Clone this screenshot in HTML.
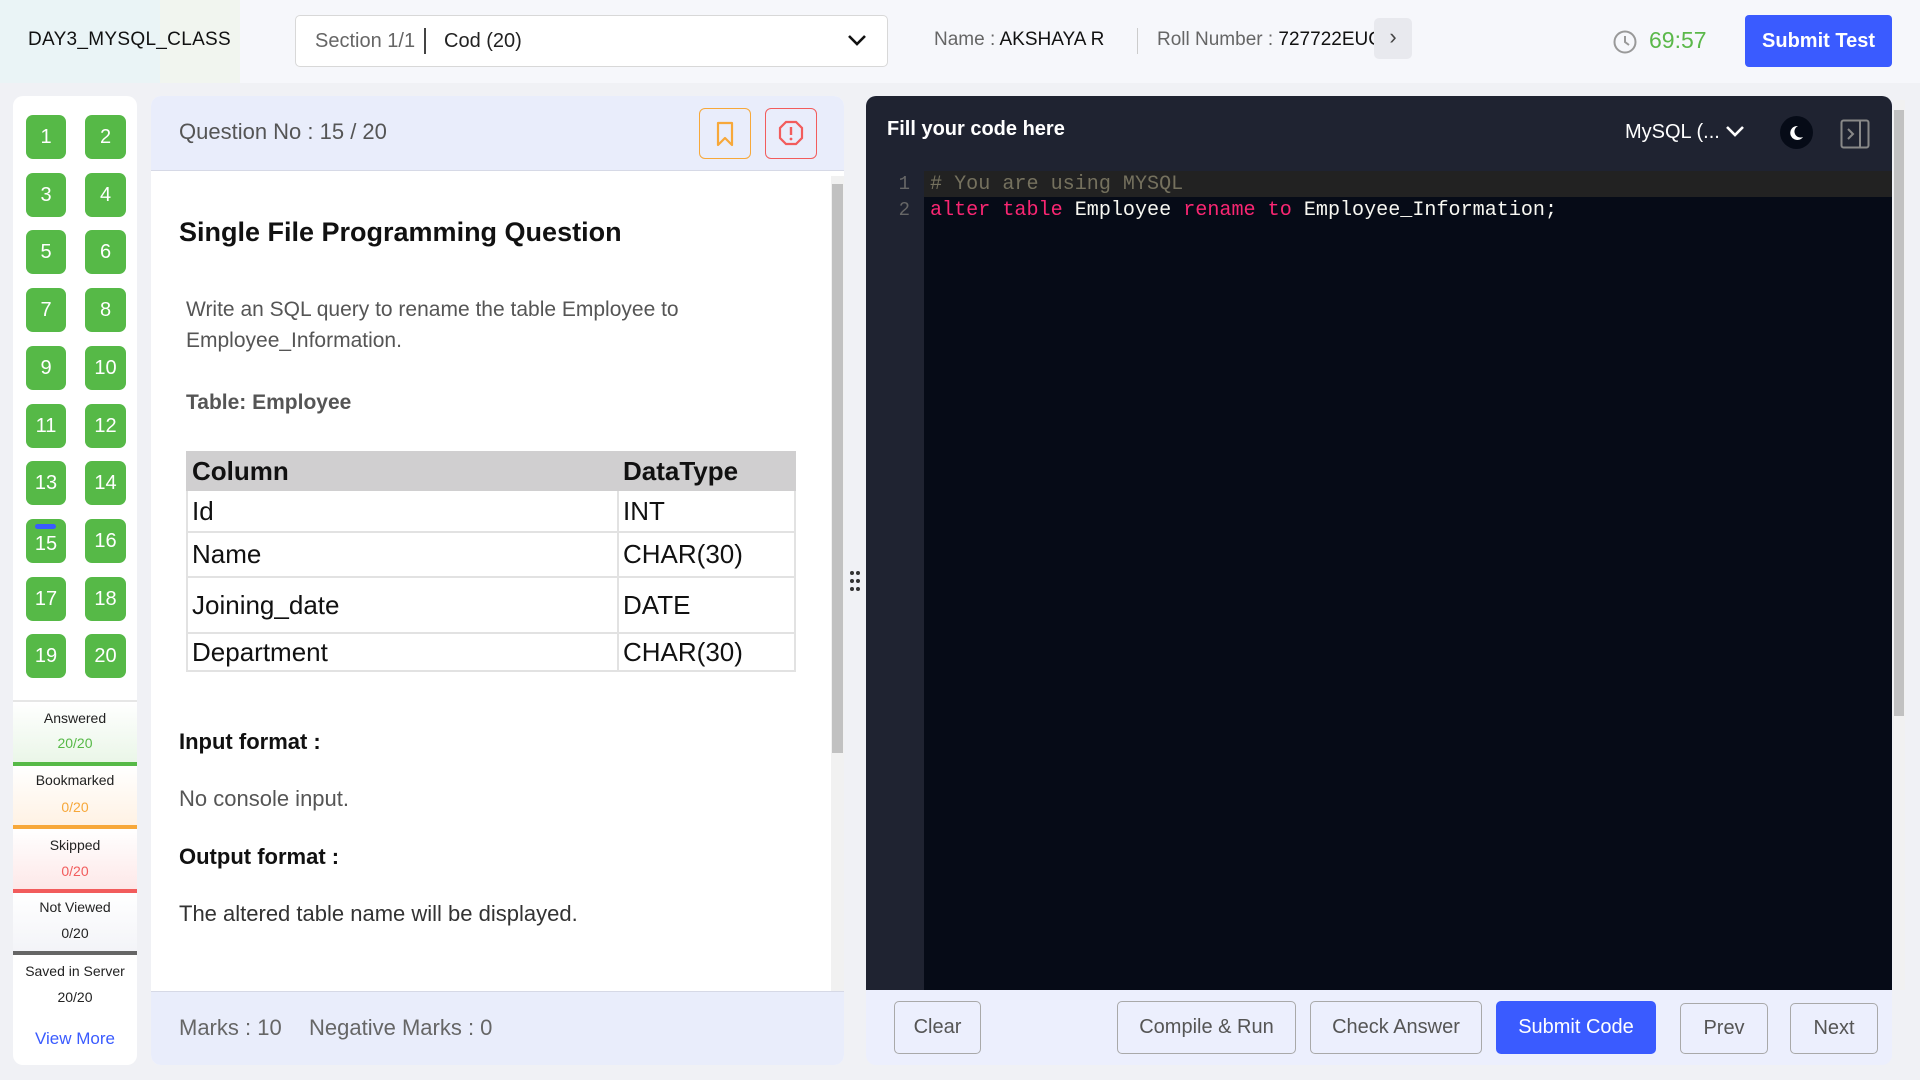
<!DOCTYPE html>
<html><head><meta charset="utf-8"><style>
*{box-sizing:border-box;margin:0;padding:0}
body{width:1920px;height:1080px;background:#f0f1f5;font-family:"Liberation Sans",sans-serif;position:relative;overflow:hidden;color:#222}
.a{position:absolute}
.hdr{left:0;top:0;width:1920px;height:83px;background:#f6f7fb}
.qb{width:40px;height:44px;background:#56b947;border-radius:7px;color:#fff;font-size:20px;display:flex;align-items:center;justify-content:center}
.c1{left:26px}.c2{left:85px;width:41px}
.st{left:13px;width:124px;text-align:center;font-size:14px;color:#222}
.btn{border:1px solid #a9a9a9;border-radius:5px;color:#555;font-size:20px;display:flex;align-items:center;justify-content:center;background:#eceffd}
table{border-collapse:collapse;font-size:26px;color:#111}
td{border:2px solid #e2e2e2;padding:0 4px;vertical-align:middle}
</style></head><body>
<div class="a hdr"></div>
<div class="a" style="left:0;top:0;width:160px;height:83px;background:#e3f1f4;opacity:.6"></div>
<div class="a" style="left:160px;top:0;width:80px;height:83px;background:#eff4e8;opacity:.6"></div>
<div class="a" style="left:28px;top:29px;font-size:19px;color:#111;letter-spacing:.3px">DAY3_MYSQL_CLASS</div>
<div class="a" style="left:295px;top:15px;width:593px;height:52px;background:#fff;border:1px solid #d8d8d8;border-radius:5px"></div>
<div class="a" style="left:315px;top:30px;font-size:20px;color:#666">Section 1/1</div>
<div class="a" style="left:424px;top:28px;width:2px;height:26px;background:#444"></div>
<div class="a" style="left:444px;top:30px;font-size:20px;color:#222">Cod (20)</div>
<svg class="a" style="left:846px;top:32px" width="22" height="16" viewBox="0 0 22 16"><path d="M3 4 L11 12 L19 4" fill="none" stroke="#111" stroke-width="2.6"/></svg>
<div class="a" style="left:934px;top:29px;font-size:19px;color:#666">Name : <span style="color:#111">AKSHAYA R</span></div>
<div class="a" style="left:1137px;top:28px;width:1px;height:26px;background:#ccc"></div>
<div class="a" style="left:1157px;top:29px;font-size:19px;color:#666;width:217px;white-space:nowrap;overflow:hidden">Roll Number : <span style="color:#111">727722EUCS</span></div>
<div class="a" style="left:1374px;top:18px;width:38px;height:41px;background:#e8e9ee;border-radius:5px;color:#444;font-size:22px;text-align:center;line-height:38px">›</div>
<svg class="a" style="left:1612px;top:29px" width="26" height="26" viewBox="0 0 26 26"><circle cx="13" cy="13" r="10.5" fill="none" stroke="#999" stroke-width="2"/><path d="M13 7v6l4 3" fill="none" stroke="#999" stroke-width="2"/></svg>
<div class="a" style="left:1649px;top:27px;font-size:23px;color:#5bb84a">69:57</div>
<div class="a" style="left:1745px;top:15px;width:147px;height:52px;background:#3a5bff;border-radius:4px;color:#fff;font-size:20px;font-weight:bold;text-align:center;line-height:52px">Submit Test</div>

<div class="a" style="left:13px;top:96px;width:124px;height:969px;background:#fff;border-radius:10px"></div>
<div class="a qb c1" style="top:115px">1</div><div class="a qb c2" style="top:115px">2</div>
<div class="a qb c1" style="top:173px">3</div><div class="a qb c2" style="top:173px">4</div>
<div class="a qb c1" style="top:230px">5</div><div class="a qb c2" style="top:230px">6</div>
<div class="a qb c1" style="top:288px">7</div><div class="a qb c2" style="top:288px">8</div>
<div class="a qb c1" style="top:346px">9</div><div class="a qb c2" style="top:346px">10</div>
<div class="a qb c1" style="top:404px">11</div><div class="a qb c2" style="top:404px">12</div>
<div class="a qb c1" style="top:461px">13</div><div class="a qb c2" style="top:461px">14</div>
<div class="a qb c1" style="top:519px;padding-top:6px">15</div><div class="a qb c2" style="top:519px">16</div>
<div class="a" style="left:35px;top:524px;width:21px;height:5px;background:#3a5bff;border-radius:3px"></div>
<div class="a qb c1" style="top:577px">17</div><div class="a qb c2" style="top:577px">18</div>
<div class="a qb c1" style="top:634px">19</div><div class="a qb c2" style="top:634px">20</div>
<div class="a" style="left:13px;top:700px;width:124px;height:2px;background:#e6e6e6"></div>
<div class="a" style="left:13px;top:702px;width:124px;height:60px;background:linear-gradient(#fff,#eaf6e8)"></div>
<div class="a" style="left:13px;top:762px;width:124px;height:4px;background:#56b947"></div>
<div class="a" style="left:13px;top:766px;width:124px;height:59px;background:linear-gradient(#fff,#fff2e4)"></div>
<div class="a" style="left:13px;top:825px;width:124px;height:4px;background:#f7a83a"></div>
<div class="a" style="left:13px;top:829px;width:124px;height:60px;background:linear-gradient(#fff,#fde8e8)"></div>
<div class="a" style="left:13px;top:889px;width:124px;height:4px;background:#f25c5c"></div>
<div class="a" style="left:13px;top:893px;width:124px;height:58px;background:linear-gradient(#fff,#f3f4f8)"></div>
<div class="a" style="left:13px;top:951px;width:124px;height:4px;background:#666"></div>
<div class="a st" style="top:710px">Answered</div><div class="a st" style="top:735px;color:#56b947">20/20</div>
<div class="a st" style="top:772px">Bookmarked</div><div class="a st" style="top:799px;color:#f7a83a">0/20</div>
<div class="a st" style="top:837px">Skipped</div><div class="a st" style="top:863px;color:#f25c5c">0/20</div>
<div class="a st" style="top:899px">Not Viewed</div><div class="a st" style="top:925px">0/20</div>
<div class="a st" style="top:963px">Saved in Server</div><div class="a st" style="top:989px">20/20</div>
<div class="a st" style="top:1029px;color:#3a5bff;font-size:17px">View More</div>

<div class="a" style="left:151px;top:96px;width:693px;height:969px;background:#fff;border-radius:10px;overflow:hidden">
 <div class="a" style="left:0;top:0;width:693px;height:75px;background:#e9edfb;border-bottom:1px solid #d6d9e6"></div>
 <div class="a" style="left:0;top:895px;width:693px;height:74px;background:#e9edfb;border-top:1px solid #d6d9e6"></div>
</div>
<div class="a" style="left:179px;top:119px;font-size:22px;color:#555">Question No : 15 / 20</div>
<div class="a" style="left:699px;top:108px;width:52px;height:51px;border:1px solid #f7a83a;border-radius:6px"></div>
<svg class="a" style="left:713px;top:120px" width="24" height="28" viewBox="0 0 24 28"><path d="M5 3h14v22l-7-7-7 7z" fill="none" stroke="#f7a83a" stroke-width="2.2" stroke-linejoin="round"/></svg>
<div class="a" style="left:765px;top:108px;width:52px;height:51px;border:1px solid #f25c5c;border-radius:6px"></div>
<svg class="a" style="left:777px;top:119px" width="28" height="28" viewBox="0 0 28 28"><path d="M9 3h10l6 6v10l-6 6H9l-6-6V9z" fill="none" stroke="#f25c5c" stroke-width="2.2"/><path d="M14 8v8" stroke="#f25c5c" stroke-width="2.4"/><circle cx="14" cy="20" r="1.4" fill="#f25c5c"/></svg>
<div class="a" style="left:831px;top:176px;width:13px;height:815px;background:#f1f1f1"></div>
<div class="a" style="left:832px;top:184px;width:11px;height:569px;background:#c1c1c1"></div>
<div class="a" style="left:179px;top:217px;font-size:27px;font-weight:bold;color:#111">Single File Programming Question</div>
<div class="a" style="left:186px;top:294px;font-size:21px;color:#555;line-height:31px;width:600px">Write an SQL query to rename the table Employee to Employee_Information.</div>
<div class="a" style="left:186px;top:391px;font-size:21px;font-weight:bold;color:#555">Table: Employee</div>
<table class="a" style="left:186px;top:451px;width:610px">
<tr style="height:38px;background:#d0cfd0;font-weight:bold"><td style="border-color:#d0cfd0;width:431px">Column</td><td style="border-color:#d0cfd0">DataType</td></tr>
<tr style="height:42px"><td>Id</td><td>INT</td></tr>
<tr style="height:45px"><td>Name</td><td>CHAR(30)</td></tr>
<tr style="height:56px"><td>Joining_date</td><td>DATE</td></tr>
<tr style="height:38px"><td>Department</td><td>CHAR(30)</td></tr>
</table>
<div class="a" style="left:179px;top:729px;font-size:22px;font-weight:bold;color:#111">Input format :</div>
<div class="a" style="left:179px;top:786px;font-size:22px;color:#555">No console input.</div>
<div class="a" style="left:179px;top:844px;font-size:22px;font-weight:bold;color:#111">Output format :</div>
<div class="a" style="left:179px;top:901px;font-size:22px;color:#333">The altered table name will be displayed.</div>
<div class="a" style="left:179px;top:1015px;font-size:22px;color:#666">Marks : 10</div>
<div class="a" style="left:309px;top:1015px;font-size:22px;color:#666">Negative Marks : 0</div>
<svg class="a" style="left:849px;top:570px" width="12" height="22"><g fill="#333"><circle cx="3" cy="3" r="2"/><circle cx="9" cy="3" r="2"/><circle cx="3" cy="11" r="2"/><circle cx="9" cy="11" r="2"/><circle cx="3" cy="19" r="2"/><circle cx="9" cy="19" r="2"/></g></svg>

<div class="a" style="left:866px;top:96px;width:1026px;height:969px;border-radius:10px;overflow:hidden;background:#eceffd">
 <div class="a" style="left:0;top:0;width:1026px;height:75px;background:#1f2331"></div>
 <div class="a" style="left:0;top:75px;width:58px;height:819px;background:#1f2331"></div>
 <div class="a" style="left:58px;top:75px;width:968px;height:819px;background:#060b17"></div>
 <div class="a" style="left:58px;top:75px;width:968px;height:26px;background:#222222"></div>
</div>
<div class="a" style="left:887px;top:118px;font-size:20px;font-weight:bold;color:#fff">Fill your code here</div>
<div class="a" style="left:1625px;top:121px;font-size:20px;color:#fff">MySQL (...</div>
<svg class="a" style="left:1724px;top:124px" width="22" height="14" viewBox="0 0 22 14"><path d="M3 3l8 8 8-8" fill="none" stroke="#fff" stroke-width="2.6"/></svg>
<div class="a" style="left:1780px;top:116px;width:33px;height:33px;border-radius:50%;background:#060b17"></div>
<svg class="a" style="left:1788px;top:124px" width="17" height="17" viewBox="0 0 17 17"><path d="M10 2a7 7 0 1 0 5 11A6 6 0 0 1 10 2z" fill="#fff"/></svg>
<svg class="a" style="left:1840px;top:119px" width="30" height="30" viewBox="0 0 30 30"><rect x="1.5" y="1.5" width="27" height="27" rx="2" fill="none" stroke="#888" stroke-width="2"/><path d="M20 2v26" stroke="#888" stroke-width="2"/><path d="M8 10l5 5-5 5" fill="none" stroke="#888" stroke-width="2"/></svg>
<div class="a" style="left:1893px;top:100px;width:12px;height:890px;background:#f1f1f1"></div>
<div class="a" style="left:1894px;top:110px;width:10px;height:606px;background:#c1c1c1"></div>
<div class="a" style="left:880px;top:173px;width:30px;text-align:right;font-family:'Liberation Mono',monospace;font-size:19px;color:#666">1</div>
<div class="a" style="left:880px;top:199px;width:30px;text-align:right;font-family:'Liberation Mono',monospace;font-size:19px;color:#666">2</div>
<div class="a" style="left:930px;top:173px;font-family:'Liberation Mono',monospace;font-size:20.1px;color:#75715e;white-space:pre"># You are using MYSQL</div>
<div class="a" style="left:930px;top:199px;font-family:'Liberation Mono',monospace;font-size:20.1px;color:#f8f8f2;white-space:pre"><span style="color:#f92672">alter table</span> Employee <span style="color:#f92672">rename to</span> Employee_Information;</div>

<div class="a btn" style="left:894px;top:1001px;width:87px;height:53px">Clear</div>
<div class="a btn" style="left:1117px;top:1001px;width:179px;height:53px">Compile &amp; Run</div>
<div class="a btn" style="left:1310px;top:1001px;width:172px;height:53px">Check Answer</div>
<div class="a btn" style="left:1496px;top:1001px;width:160px;height:53px;background:#3a5bff;border-color:#3a5bff;color:#fff">Submit Code</div>
<div class="a btn" style="left:1680px;top:1003px;width:88px;height:51px">Prev</div>
<div class="a btn" style="left:1790px;top:1003px;width:88px;height:51px">Next</div>
</body></html>
